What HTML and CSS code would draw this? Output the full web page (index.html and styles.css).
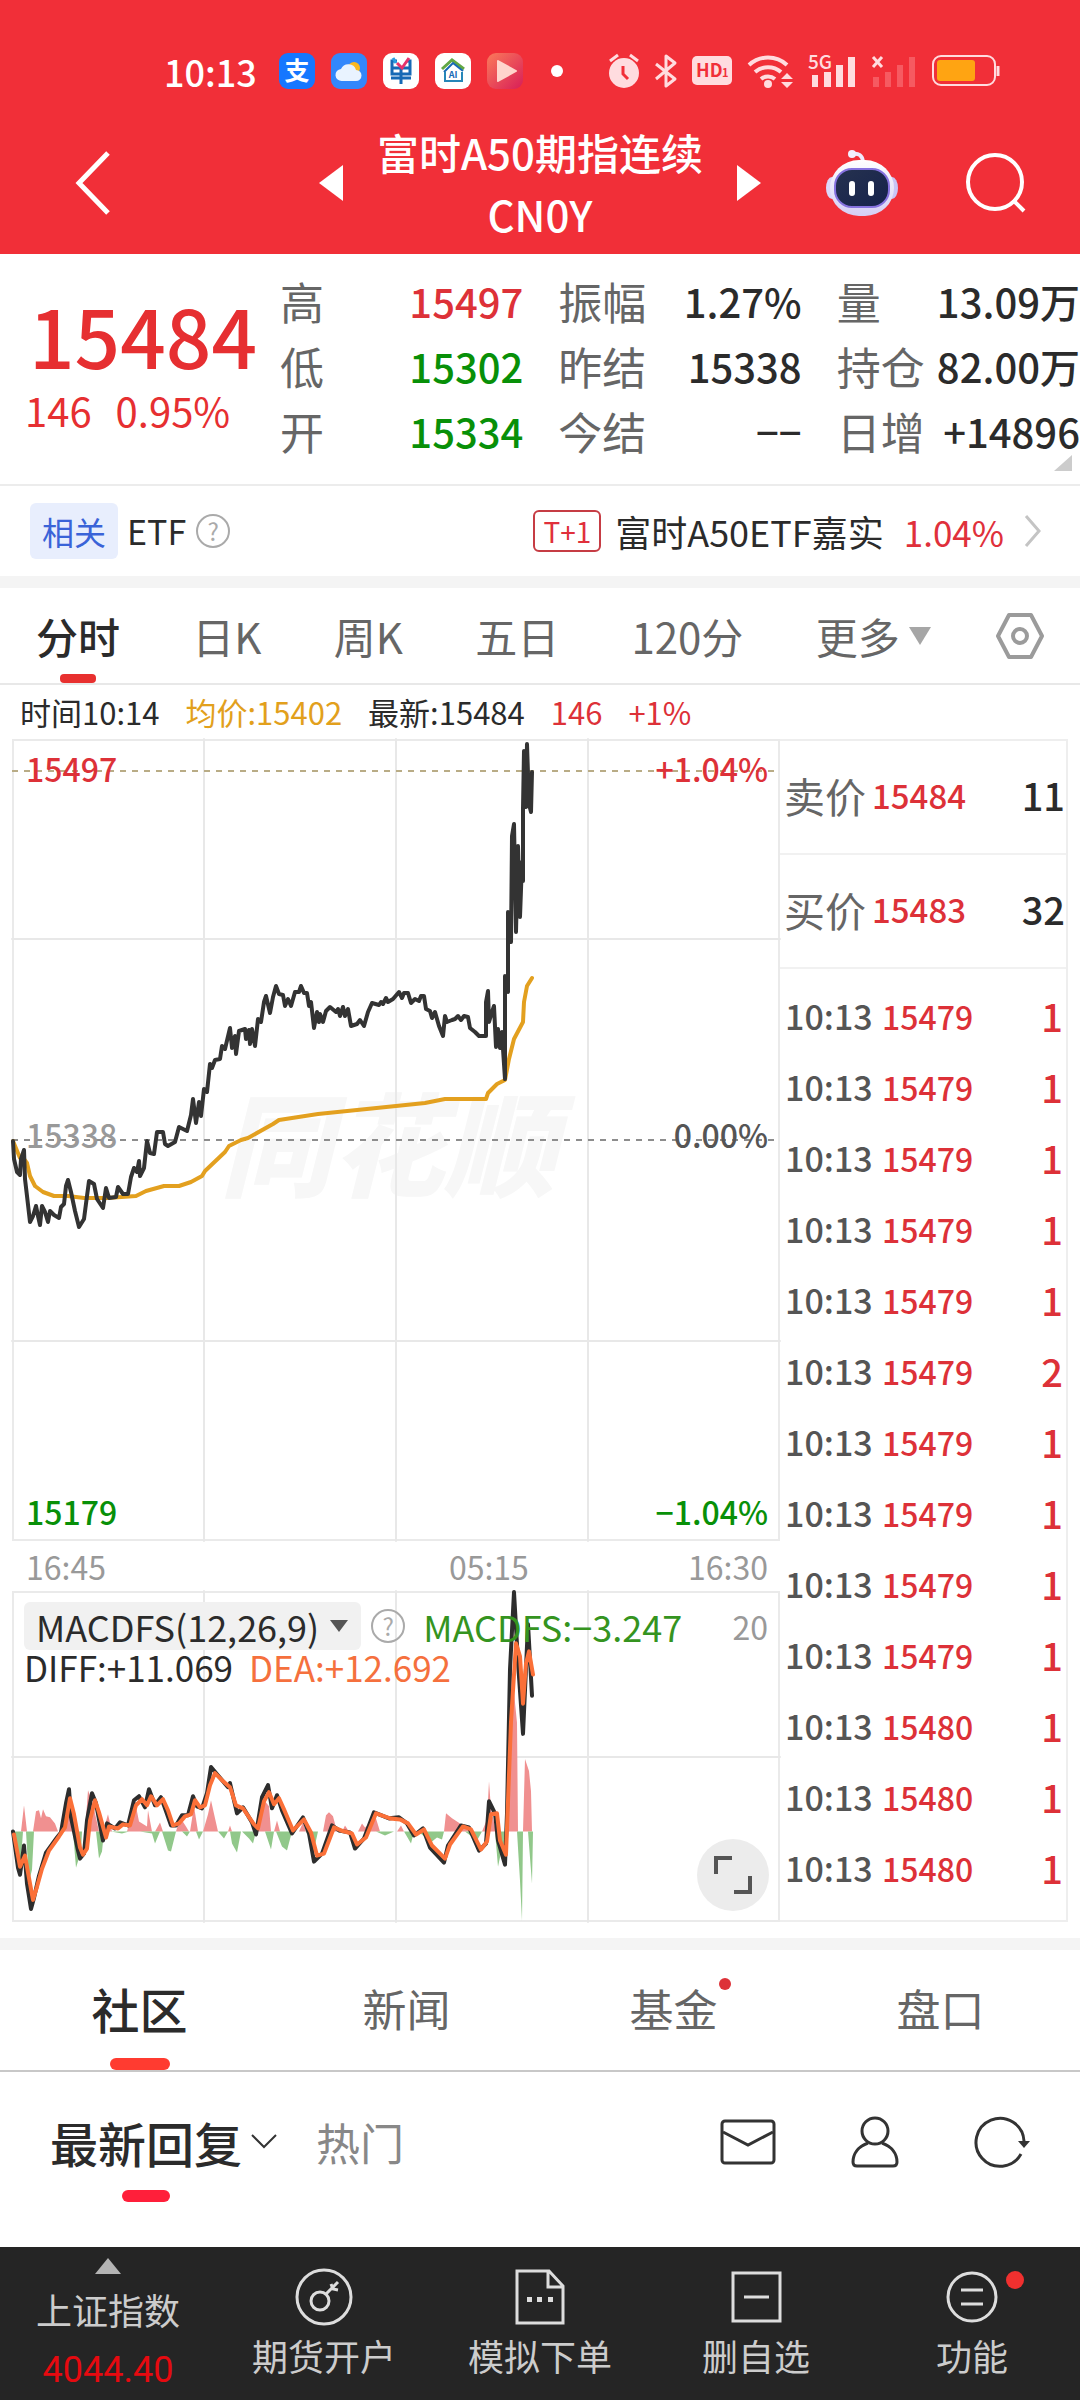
FILE: index.html
```html
<!DOCTYPE html>
<html lang="zh-CN">
<head>
    <meta charset="UTF-8">
    <meta name="viewport" content="width=device-width, initial-scale=1.0">
    <title>富时A50期指连续 CN0Y</title>
    <link rel="stylesheet" href="styles.css">
</head>
<body>
    <header class="header">
        <div class="status-bar">
            <span class="clock">10:13</span>
            <div class="status-apps">
                <svg width="36" height="36" viewBox="0 0 36 36"><rect width="36" height="36" rx="9" fill="#1677ff"/><text x="18" y="27" text-anchor="middle" font-size="25" font-weight="700" fill="#fff">支</text></svg>
                <svg width="36" height="36" viewBox="0 0 36 36"><rect width="36" height="36" rx="9" fill="#3387fb"/><circle cx="23" cy="15" r="6" fill="#fdb81e"/><path d="M11 28a6 6 0 0 1-1-12 8 8 0 0 1 15 1 5.500 5.500 0 0 1 0 11z" fill="#e9f3ff"/></svg>
                <svg width="36" height="36" viewBox="0 0 36 36"><rect width="36" height="36" rx="9" fill="#fff"/><path d="M14 8H9v13h18V8h-3M9 15h18M18 15v16M8 25h20" fill="none" stroke="#1769b5" stroke-width="3"/><path d="M10 5l3 5" stroke="#2b9de0" stroke-width="3"/><path d="M14 10l5 5 7-10" fill="none" stroke="#e7336c" stroke-width="3"/></svg>
                <svg width="36" height="36" viewBox="0 0 36 36"><rect width="36" height="36" rx="9" fill="#fff"/><path d="M7 16l10-9 12 9" fill="none" stroke="#62a744" stroke-width="3"/><path d="M9 19l9-9 10 8" fill="none" stroke="#1769b5" stroke-width="2"/><path d="M10 19v9h17v-9" fill="none" stroke="#2686b8" stroke-width="2"/><text x="18" y="25" text-anchor="middle" font-size="9" font-weight="700" fill="#1769b5">AI</text></svg>
                <svg width="36" height="36" viewBox="0 0 36 36"><defs><linearGradient id="play" x1="0" y1="0" x2="1" y2="1"><stop offset="0" stop-color="#fb7a5a"/><stop offset="1" stop-color="#d81e58"/></linearGradient></defs><rect width="36" height="36" rx="9" fill="url(#play)"/><path d="M11 8l18 10-18 10z" fill="#ffd5cc" stroke="#ffd5cc" stroke-width="2" stroke-linejoin="round"/></svg>
            </div>
            <span class="status-dot"></span>
            <div class="status-icons">
                <svg width="32" height="36" viewBox="0 0 32 36"><circle cx="16" cy="20" r="15" fill="#ffdcdf"/><path d="M2 8l8-6M30 8l-8-6" stroke="#ffdcdf" stroke-width="3"/><path d="M15 13v8l5 5" fill="none" stroke="#f12f38" stroke-width="3"/></svg>
                <svg width="22" height="36" viewBox="0 0 22 36"><path d="M1 11l19 15-9 7V3l9 7L1 26" fill="none" stroke="#ffdcdf" stroke-width="3" stroke-linejoin="round"/></svg>
                <svg width="40" height="30" viewBox="0 0 40 30"><rect width="40" height="29" rx="5" fill="#ffdcdf"/><text x="4" y="21" font-size="18" font-weight="700" fill="#f12f38">HD</text><text x="30" y="21" font-size="11" font-weight="700" fill="#f12f38">1</text></svg>
                <svg width="46" height="36" viewBox="0 0 46 36"><g fill="none" stroke="#ffdcdf" stroke-width="4"><path d="M2 12a28 28 0 0 1 38 0"/><path d="M8 19a20 20 0 0 1 26 0"/><path d="M14 26a11 11 0 0 1 14 0"/></g><circle cx="21" cy="31" r="4" fill="#ffdcdf"/><path d="M34 26l6-6 6 6zM34 29l6 6 6-6z" fill="#ffdcdf"/></svg>
                <svg width="48" height="36" viewBox="0 0 48 36"><text x="0" y="16" font-size="19" font-weight="500" fill="#ffdcdf">5G</text><path d="M4 22h6v12H4zM16 19h7v15h-7zM28 12h7v22h-7zM40 4h7v30h-7z" fill="#ffdcdf"/></svg>
                <svg width="46" height="36" viewBox="0 0 46 36"><path d="M2 4l9 10M11 4L2 14" stroke="#ffdcdf" stroke-width="3"/><path d="M2 24h6v10H2zM14 19h6v15h-6zM26 12h6v22h-6zM38 4h6v30h-6z" fill="#f65a61"/></svg>
                <svg width="68" height="32" viewBox="0 0 68 32"><rect x="1" y="1" width="62" height="29" rx="8" fill="none" stroke="#ffdcdf" stroke-width="2"/><rect x="5" y="5" width="38" height="21" rx="3" fill="#ffa412"/><path d="M66 11v10" stroke="#ffdcdf" stroke-width="3"/></svg>
            </div>
        </div>
        <div class="title-bar">
            <button class="icon-btn back" aria-label="返回">
                <svg width="34" height="64" viewBox="0 0 34 64"><path d="M32 2L3 32l29 30" fill="none" stroke="#fff" stroke-width="5"/></svg>
            </button>
            <div class="title-nav">
                <button class="icon-btn" aria-label="上一个"><svg width="24" height="36" viewBox="0 0 24 36"><path d="M24 0v36L0 18z" fill="#fff"/></svg></button>
                <h1 class="title">富时A50期指连续<br>CN0Y</h1>
                <button class="icon-btn" aria-label="下一个"><svg width="24" height="36" viewBox="0 0 24 36"><path d="M0 0v36l24-18z" fill="#fff"/></svg></button>
            </div>
            <div class="title-tools">
                <button class="icon-btn" aria-label="智能助手">
                    <svg width="72" height="66" viewBox="0 0 72 66">
                        <defs>
                            <linearGradient id="shell" x1="0" y1="0" x2="0" y2="1"><stop offset="0" stop-color="#fff"/><stop offset="1" stop-color="#d5cef5"/></linearGradient>
                            <linearGradient id="visor" x1="0" y1="0" x2="1" y2="1"><stop offset="0" stop-color="#26324f"/><stop offset="1" stop-color="#16224c"/></linearGradient>
                        </defs>
                        <path d="M26 4q10-2 11 8" fill="none" stroke="#efeafd" stroke-width="4"/><circle cx="26" cy="4" r="4" fill="#f3f0ff"/>
                        <ellipse cx="6" cy="38" rx="6" ry="11" fill="#dcd8fa"/><ellipse cx="66" cy="38" rx="6" ry="11" fill="#c9c4f6"/>
                        <rect x="4" y="10" width="64" height="56" rx="29" fill="url(#shell)"/>
                        <rect x="9" y="19" width="54" height="38" rx="17" fill="url(#visor)" stroke="#8672df" stroke-width="2"/>
                        <path d="M26 34v9M45 34v9" stroke="#fff" stroke-width="6" stroke-linecap="round"/>
                    </svg>
                </button>
                <button class="icon-btn" aria-label="搜索">
                    <svg width="60" height="60" viewBox="0 0 60 60"><circle cx="29" cy="29" r="27" fill="none" stroke="#fff" stroke-width="4"/><path d="M47 47l11 11" stroke="#fff" stroke-width="4"/></svg>
                </button>
            </div>
        </div>
    </header>

    <main>
        <section class="quote">
            <div class="price">
                <div class="price-now">15484</div>
                <div class="price-change"><span>146</span><span>0.95%</span></div>
            </div>
            <dl class="stats">
                <div class="stat"><dt>高</dt><dd class="up">15497</dd></div>
                <div class="stat"><dt>振幅</dt><dd>1.27%</dd></div>
                <div class="stat"><dt>量</dt><dd>13.09万</dd></div>
                <div class="stat"><dt>低</dt><dd class="down">15302</dd></div>
                <div class="stat"><dt>昨结</dt><dd>15338</dd></div>
                <div class="stat"><dt>持仓</dt><dd>82.00万</dd></div>
                <div class="stat"><dt>开</dt><dd class="down">15334</dd></div>
                <div class="stat"><dt>今结</dt><dd>−−</dd></div>
                <div class="stat"><dt>日增</dt><dd>+14896</dd></div>
            </dl>
            <span class="corner"></span>
        </section>

        <section class="related">
            <span class="related-tag">相关</span>
            <span class="related-type">ETF</span>
            <span class="help">?</span>
            <a href="#" class="related-link">
                <span class="t1">T+1</span>
                <span class="fund">富时A50ETF嘉实</span>
                <span class="fund-change">1.04%</span>
                <svg width="18" height="32" viewBox="0 0 18 32"><path d="M2 1l13 15L2 31" fill="none" stroke="#c4c4c4" stroke-width="3"/></svg>
            </a>
        </section>

        <nav class="periods">
            <a href="#" class="period active">分时</a>
            <a href="#" class="period">日K</a>
            <a href="#" class="period">周K</a>
            <a href="#" class="period">五日</a>
            <a href="#" class="period">120分</a>
            <a href="#" class="period more">更多<svg width="24" height="20" viewBox="0 0 24 20"><path d="M1 1h22L12 19z" fill="#a6a6a6"/></svg></a>
            <button class="icon-btn" aria-label="设置">
                <svg width="48" height="48" viewBox="0 0 48 48"><path d="M13 3h22l11 21-11 21H13L2 24z" fill="none" stroke="#9b9b9b" stroke-width="4" stroke-linejoin="round"/><circle cx="24" cy="24" r="7" fill="none" stroke="#9b9b9b" stroke-width="4"/></svg>
            </button>
        </nav>

        <div class="info">
            <span>时间10:14</span>
            <span class="avg">均价:15402</span>
            <span>最新:15484</span>
            <span class="up">146</span>
            <span class="up">+1%</span>
        </div>

        <section class="market">
            <div class="charts">
                <div class="chart price-chart">
                    <div class="watermark">同花顺</div>
                    <svg class="plot" viewBox="0 0 768 802" preserveAspectRatio="none">
                        <path class="grid" d="M192 0v802M384 0v802M576 0v802M0 200h768M0 602h768"/>
                        <path class="limit" d="M0 32h768"/>
                        <path class="base" d="M0 401h768"/>
                        <polyline class="avg-line" points="1,402 8,419 12,420 15,424 18,437 23,447 31,453 42,457 56,457 72,459 95,459 124,457 134,452 152,447 167,447 179,443 190,437 193,432 213,413 217,407 229,401 236,399 261,385 267,381 306,375 345,371 384,367 413,364 433,360 474,360 476,354 485,345 493,341 497,320 502,300 511,283 512,263 515,247 520,239"/>
                        <polyline class="price-line" points="1,402 2,420 5,433 8,436 9,420 12,411 13,440 15,457 18,483 21,477 24,467 26,477 28,486 30,467 33,473 36,483 38,472 42,476 47,479 49,468 52,465 54,447 56,441 59,453 63,472 67,488 72,480 75,457 77,442 82,445 85,460 91,469 94,449 97,459 104,458 106,448 111,455 116,455 119,438 122,429 125,433 127,422 128,437 132,429 135,402 138,414 142,415 145,393 151,393 153,405 156,407 163,403 167,388 175,392 179,376 181,360 184,384 187,363 189,377 192,350 195,353 198,325 200,329 203,321 208,320 210,307 213,310 218,289 220,309 223,297 224,315 227,292 233,290 234,300 237,291 238,305 240,290 243,307 246,280 249,283 252,263 254,257 258,274 261,258 264,247 267,255 271,256 273,267 276,260 279,267 283,253 287,253 289,247 292,254 295,254 297,267 299,263 302,289 305,273 307,283 308,275 311,283 314,272 318,268 324,273 326,270 328,277 331,268 333,277 336,270 339,287 345,285 348,281 352,287 356,273 360,264 367,266 369,263 371,265 374,259 376,263 381,260 387,253 390,259 392,254 396,254 399,264 403,260 407,262 409,257 412,257 414,270 418,272 420,279 423,273 427,287 431,297 433,277 435,283 440,281 443,280 446,277 449,281 452,277 456,278 458,289 463,293 467,297 474,297 474,263 476,252 477,283 480,273 482,267 484,308 486,290 488,309 490,293 491,310 493,340 493,237 496,253 496,173 499,203 500,97 502,85 504,193 506,107 508,178 510,123 511,142 511,70 512,12 514,68 515,5 517,65 519,73 520,33"/>
                    </svg>
                    <span class="axis top-left up">15497</span>
                    <span class="axis top-right up">+1.04%</span>
                    <span class="axis mid-left">15338</span>
                    <span class="axis mid-right">0.00%</span>
                    <span class="axis bottom-left down">15179</span>
                    <span class="axis bottom-right down">−1.04%</span>
                </div>
                <div class="times">
                    <span>16:45</span>
                    <span>05:15</span>
                    <span>16:30</span>
                </div>
                <div class="chart macd-chart">
                    <svg class="plot" viewBox="0 0 768 329" preserveAspectRatio="none">
                        <path class="grid" d="M192 0v329M384 0v329M576 0v329M0 165h768"/>
                        <path class="hist-up" d="M9 239l3-26 3 26zM21 239l3-20 3-1 2 8 2-9 3 7 4 1 5 6 3 8zM50 239l6-38 4 38zM73 239l3-41 5 14 6 27zM91 239l5-17 4 17zM115 239l8-30 4 20 8 5 1-16 4 21zM143 239l5-9 3 9zM164 239l4-14 6 9 3 5zM178 239l4-25 4 25zM191 239l5-17 3-14 4 18 3 13zM216 239l2-6 2 6zM243 239l5-14 5-16 4 5 2 25zM262 239l3-11 3 11zM287 239l4-9 3 9zM311 239l3-16 3-3 4 4 4 15zM330 239l3-6 4 6zM346 239l4-8 3 4 5-4 5-8 5 16zM385 239l4-6 3 6zM432 239l2-18 6 5 8 5 12 8zM470 239l5-12 2-38 2 28 5 22zM494 239l2-98 5-50 4 40 1 108zM511 239l2-72 4 12 2 20 1 40z"/>
                        <path class="hist-down" d="M1 239h10l-2 28-3 3zM14 239h8l-2 38-3 12zM61 239h9l-1 20-5 16zM84 239h8l-2 20-3 7zM99 239h18l-7 2zM128 239h20l-5 12-3-10zM150 239h14l-5 20-3-1zM170 239h8l-3 5zM184 239h7l-4 8zM206 239h10l-4 7zM218 239h11l-4 21-5-9zM230 239h14l-3 12-4-5zM253 239h9l-3 18zM264 239h16l-5 19-5-4zM294 239h12l-4 18-5-12zM364 239h18l-9 4zM392 239h10l-3 12zM406 239h26l-2 8-5-2-5 4-5-3zM453 239h17l-5 9zM483 239h10l-1 27-3-6-3 14zM505 239h6l-1 89-2-40zM516 239h5l-1 52z"/>
                        <polyline class="diff-line" points="1,239 6,275 8,282 12,253 15,291 19,316 22,305 27,283 34,260 45,245 49,240 54,211 57,197 59,225 66,258 68,266 72,261 75,228 80,201 84,211 91,248 95,231 103,236 108,230 116,233 122,208 127,204 133,215 137,197 143,213 149,205 153,216 159,233 164,233 170,223 176,223 181,204 185,214 190,216 195,201 199,175 204,181 216,195 218,191 225,221 231,215 240,230 244,242 250,205 256,193 260,216 265,203 270,218 280,241 291,225 297,241 302,269 310,261 320,233 327,238 338,240 343,256 352,246 362,220 377,226 387,225 395,231 402,243 411,236 418,255 432,270 436,253 449,233 457,235 467,258 474,251 477,209 483,221 486,248 493,272 495,221 498,78 502,1 506,71 511,142 516,33 520,104"/>
                        <polyline class="dea-line" points="2,242 8,274 13,263 16,280 21,307 25,294 30,276 37,258 47,244 53,235 58,206 62,222 68,255 71,262 75,256 78,228 83,208 87,220 94,245 97,234 106,236 111,232 118,233 124,213 130,207 135,213 139,204 145,213 151,207 156,218 161,233 167,231 173,224 179,222 183,208 188,215 193,213 198,193 203,181 210,188 218,195 224,213 231,216 242,232 246,236 252,209 257,200 262,212 267,206 272,217 281,238 292,227 299,240 305,263 312,261 322,235 329,238 340,241 345,252 354,245 364,221 378,226 388,227 396,231 404,242 412,237 420,253 433,266 438,252 451,234 459,237 469,257 475,249 479,222 485,221 488,248 494,262 499,130 504,52 508,65 511,112 514,72 517,60 521,83"/>
                    </svg>
                    <div class="legend">
                        <button class="indicator">MACDFS(12,26,9)<svg width="20" height="14" viewBox="0 0 20 14"><path d="M1 1h18l-9 12z" fill="#555"/></svg></button>
                        <span class="help">?</span>
                        <span class="macd">MACDFS:−3.247</span>
                        <span class="scale">20</span>
                    </div>
                    <div class="legend-values">
                        <span>DIFF:+11.069</span>
                        <span class="dea">DEA:+12.692</span>
                    </div>
                    <button class="expand" aria-label="全屏">
                        <svg width="38" height="38" viewBox="0 0 38 38"><path d="M2 18V2h16M36 20v16H20" fill="none" stroke="#555" stroke-width="4"/></svg>
                    </button>
                </div>
            </div>

            <div class="ticks">
                <div class="ask"><span class="side">卖价</span><span class="side-price">15484</span><span class="qty">11</span></div>
                <div class="ask"><span class="side">买价</span><span class="side-price">15483</span><span class="qty">32</span></div>
                <table class="trades">
                    <tr><td>10:13</td><td>15479</td><td>1</td></tr>
                    <tr><td>10:13</td><td>15479</td><td>1</td></tr>
                    <tr><td>10:13</td><td>15479</td><td>1</td></tr>
                    <tr><td>10:13</td><td>15479</td><td>1</td></tr>
                    <tr><td>10:13</td><td>15479</td><td>1</td></tr>
                    <tr><td>10:13</td><td>15479</td><td>2</td></tr>
                    <tr><td>10:13</td><td>15479</td><td>1</td></tr>
                    <tr><td>10:13</td><td>15479</td><td>1</td></tr>
                    <tr><td>10:13</td><td>15479</td><td>1</td></tr>
                    <tr><td>10:13</td><td>15479</td><td>1</td></tr>
                    <tr><td>10:13</td><td>15480</td><td>1</td></tr>
                    <tr><td>10:13</td><td>15480</td><td>1</td></tr>
                    <tr><td>10:13</td><td>15480</td><td>1</td></tr>
                </table>
            </div>
        </section>

        <nav class="sections">
            <a href="#" class="active">社区</a>
            <a href="#">新闻</a>
            <a href="#"><span class="has-dot">基金</span></a>
            <a href="#">盘口</a>
        </nav>

        <section class="community">
            <button class="sort active">最新回复<svg width="28" height="20" viewBox="0 0 28 20"><path d="M2 3l12 12L26 3" fill="none" stroke="#333" stroke-width="2"/></svg></button>
            <button class="sort hot">热门</button>
            <div class="community-tools">
                <button class="icon-btn" aria-label="消息"><svg width="56" height="52" viewBox="0 0 56 52"><rect x="2" y="5" width="52" height="42" rx="3" fill="none" stroke="#333" stroke-width="3"/><path d="M3 16l25 13 25-13" fill="none" stroke="#333" stroke-width="3"/></svg></button>
                <button class="icon-btn" aria-label="我的"><svg width="48" height="52" viewBox="0 0 48 52"><circle cx="24" cy="15" r="13" fill="none" stroke="#333" stroke-width="3"/><path d="M17 27C6 31 2 39 2 46q0 4 4 4h36q4 0 4-4c0-7-4-15-15-19" fill="none" stroke="#333" stroke-width="3"/></svg></button>
                <button class="icon-btn" aria-label="刷新"><svg width="56" height="52" viewBox="0 0 56 52"><path d="M47 38A24 24 0 1 1 50 25" fill="none" stroke="#333" stroke-width="3"/><path d="M44 25h12l-6 7z" fill="#333"/></svg></button>
            </div>
        </section>
    </main>

    <footer class="footer">
        <a href="#" class="index">
            <svg width="26" height="16" viewBox="0 0 26 16"><path d="M13 0l13 16H0z" fill="#b4b4b4"/></svg>
            <span>上证指数</span>
            <span class="index-value">4044.40</span>
        </a>
        <a href="#">
            <svg width="58" height="58" viewBox="0 0 58 58"><g fill="none" stroke="#ddd" stroke-width="3"><circle cx="29" cy="29" r="27"/><circle cx="25" cy="33" r="9"/><path d="M31 26l12-12M36 16l2 5 5 1"/></g></svg>
            <span>期货开户</span>
        </a>
        <a href="#">
            <svg width="58" height="58" viewBox="0 0 58 58"><path d="M6 3h32l14 15v37H6zM37 3v16h15" fill="none" stroke="#ddd" stroke-width="3"/><path d="M16 29h5v5h-5zM26 29h5v5h-5zM37 29h5v5h-5z" fill="#ddd"/></svg>
            <span>模拟下单</span>
        </a>
        <a href="#">
            <svg width="58" height="58" viewBox="0 0 58 58"><path d="M6 5h47v48H6zM17 29h25" fill="none" stroke="#ddd" stroke-width="3"/></svg>
            <span>删自选</span>
        </a>
        <a href="#" class="func">
            <svg width="58" height="58" viewBox="0 0 58 58"><circle cx="29" cy="29" r="24" fill="none" stroke="#ddd" stroke-width="3"/><path d="M18 22h22M18 36h22" stroke="#ddd" stroke-width="3"/></svg>
            <span>功能</span>
        </a>
    </footer>
</body>
</html>
```
FILE: styles.css
```css
* {
    box-sizing: border-box;
}
body {
    margin: 0;
    min-height: 100vh;
    display: flex;
    flex-direction: column;
    background-color: #fff;
    color: #2b2b2b;
    font-family: "Noto Sans CJK SC", sans-serif;
    font-size: 32px;
    line-height: 1;
}
a {
    color: inherit;
    text-decoration: none;
}
button {
    font-family: inherit;
    border: 0;
    padding: 0;
    background: none;
    color: inherit;
    cursor: pointer;
}
svg {
    display: block;
    flex-shrink: 0;
    overflow: visible;
}
.icon-btn {
    display: block;
}
.up {
    color: #dd3138;
}
.down {
    color: #089008;
}

/* header */
.header {
    background-color: #f12f38;
    color: #fff;
}
.status-bar {
    display: flex;
    align-items: center;
    height: 100px;
    padding: 42px 80px 0 164px;
}
.clock {
    font-size: 36px;
    font-weight: 500;
}
.status-apps {
    display: flex;
    gap: 16px;
    margin-left: 22px;
}
.status-dot {
    width: 12px;
    height: 12px;
    margin-left: 28px;
    border-radius: 50%;
    background-color: #fff;
}
.status-icons {
    display: flex;
    align-items: center;
    gap: 15px;
    margin-left: auto;
}
.title-bar {
    display: grid;
    grid-template-columns: 1fr auto 1fr;
    align-items: center;
    height: 154px;
    padding: 12px 54px 0;
}
.back {
    margin-left: 22px;
    justify-self: start;
}
.title-nav {
    display: flex;
    align-items: center;
    gap: 34px;
}
.title {
    margin: 0;
    font-size: 42px;
    font-weight: 500;
    line-height: 62px;
    text-align: center;
}
.title-tools {
    display: flex;
    align-items: center;
    justify-content: flex-end;
    gap: 68px;
}

/* quote */
.quote {
    position: relative;
    display: flex;
    height: 232px;
    padding-top: 14px;
    border-bottom: 2px solid #ececec;
}
.price {
    width: 280px;
    padding: 26px 0 0 29px;
    color: #e62f31;
}
.price-now {
    font-size: 80px;
    font-weight: 500;
    line-height: 80px;
}
.price-change {
    display: flex;
    gap: 24px;
    margin-left: -4px;
    font-size: 40px;
    line-height: 72px;
}
.stats {
    flex: 1;
    display: grid;
    grid-template-columns: repeat(3, 1fr);
    grid-auto-rows: 65px;
    column-gap: 35px;
    margin: 0;
}
.stat {
    display: flex;
    align-items: center;
    justify-content: space-between;
    white-space: nowrap;
}
.stat dt {
    color: #666;
    font-size: 44px;
}
.stat dd {
    margin: 0;
    font-size: 40px;
    font-weight: 500;
}
.corner {
    position: absolute;
    right: 8px;
    bottom: 13px;
    border-left: 18px solid transparent;
    border-bottom: 16px solid #ccc;
}

/* related fund */
.related {
    display: flex;
    align-items: center;
    height: 90px;
    padding: 0 38px 0 30px;
}
.related-tag {
    padding: 0 12px;
    border-radius: 6px;
    background-color: #e8eefd;
    color: #3a63d8;
    font-size: 32px;
    line-height: 56px;
}
.related-type {
    margin: 0 10px 0 9px;
    font-size: 34px;
}
.help {
    width: 34px;
    height: 34px;
    border: 2px solid #aaa;
    border-radius: 50%;
    color: #aaa;
    font-size: 24px;
    line-height: 29px;
    text-align: center;
}
.related-link {
    display: flex;
    align-items: center;
    margin-left: auto;
}
.t1 {
    padding: 0 8px;
    border: 2px solid #c63c44;
    border-radius: 6px;
    color: #e0303b;
    font-size: 28px;
    line-height: 38px;
}
.fund {
    margin: 0 20px 0 14px;
    font-size: 36px;
}
.fund-change {
    margin-right: 20px;
    color: #e0303b;
    font-size: 35px;
}

/* chart tabs */
.periods {
    display: flex;
    align-items: center;
    justify-content: space-between;
    height: 109px;
    padding: 0 36px;
    border-top: 12px solid #f4f4f4;
    border-bottom: 2px solid #e8e8e8;
}
.period {
    position: relative;
    color: #666;
    font-size: 42px;
    line-height: 95px;
}
.period.active {
    color: #2b2b2b;
    font-weight: 500;
}
.period.active::after {
    content: "";
    position: absolute;
    left: 50%;
    bottom: 0;
    width: 36px;
    height: 9px;
    margin-left: -18px;
    border-radius: 4px;
    background-color: #e8302f;
}
.more {
    display: flex;
    align-items: center;
    gap: 8px;
    margin-right: -8px;
}
.info {
    display: flex;
    gap: 26px;
    padding-left: 20px;
    font-size: 31px;
    line-height: 54px;
}
.avg {
    color: #e2a01c;
}

/* charts and trade list */
.market {
    display: grid;
    grid-template-columns: 8fr 3fr;
    padding: 0 12px 16px;
}
.chart {
    position: relative;
    border: 2px solid #eaeaea;
}
.price-chart {
    height: 802px;
}
.macd-chart {
    height: 331px;
}
.plot {
    position: absolute;
    top: -2px;
    left: -2px;
    width: calc(100% + 4px);
    height: calc(100% + 4px);
}
.plot path, .plot polyline {
    fill: none;
    stroke-linejoin: round;
    stroke-linecap: round;
}
.plot .grid {
    stroke: #e8e8e8;
    stroke-width: 2;
}
.plot .limit {
    stroke: #b9ac86;
    stroke-width: 2;
    stroke-linecap: butt;
    stroke-dasharray: 6 6;
}
.plot .base {
    stroke: #8d8d8d;
    stroke-width: 2;
    stroke-linecap: butt;
    stroke-dasharray: 6 6;
}
.plot .avg-line {
    stroke: #e3a01f;
    stroke-width: 4;
}
.plot .price-line {
    stroke: #333;
    stroke-width: 4;
}
.plot .hist-up {
    fill: #f09090;
}
.plot .hist-down {
    fill: #91c88a;
}
.plot .diff-line {
    stroke: #2d2d2d;
    stroke-width: 4;
}
.plot .dea-line {
    stroke: #fb7038;
    stroke-width: 4;
}
.watermark {
    position: absolute;
    top: 342px;
    left: 206px;
    color: #f7f7f7;
    font-size: 112px;
    font-style: italic;
    font-weight: 900;
}
.axis {
    position: absolute;
    font-weight: 500;
}
.top-left, .mid-left, .bottom-left {
    left: 12px;
}
.top-right, .mid-right, .bottom-right {
    right: 10px;
}
.top-left, .top-right {
    top: 11px;
}
.mid-left, .mid-right {
    top: 377px;
    color: #555;
}
.mid-left {
    color: #999;
}
.bottom-left, .bottom-right {
    bottom: 12px;
}
.times {
    display: grid;
    grid-template-columns: 57% 1fr auto;
    padding: 0 12px 0 14px;
    color: #999;
    line-height: 50px;
}
.legend {
    position: absolute;
    top: 9px;
    left: 10px;
    right: 10px;
    display: flex;
    align-items: center;
    font-size: 36px;
}
.indicator {
    display: flex;
    align-items: center;
    gap: 10px;
    padding: 0 12px;
    border-radius: 6px;
    background-color: #f1f1f1;
    font-size: 36px;
    line-height: 48px;
}
.legend .help {
    margin: 0 18px 0 10px;
}
.macd {
    color: #35941f;
}
.scale {
    margin-left: auto;
    color: #999;
    font-size: 32px;
}
.legend-values {
    position: absolute;
    top: 56px;
    left: 10px;
    display: flex;
    gap: 16px;
    font-size: 35px;
}
.dea {
    color: #f5703d;
}
.expand {
    position: absolute;
    right: 9px;
    bottom: 9px;
    display: flex;
    align-items: center;
    justify-content: center;
    width: 72px;
    height: 72px;
    border-radius: 50%;
    background-color: #ececec;
}
.ticks {
    border: 2px solid #eee;
    border-left: 0;
    font-weight: 500;
}
.ask {
    display: flex;
    align-items: center;
    height: 114px;
    padding: 0 1px 4px 4px;
    border-bottom: 2px solid #f1f1f1;
}
.side {
    margin-right: 6px;
    color: #666;
    font-size: 41px;
    font-weight: 400;
}
.side-price {
    color: #dd3138;
    font-size: 33px;
}
.qty {
    margin-left: auto;
    font-size: 38px;
}
.trades {
    width: 100%;
    margin-top: 11px;
    border-collapse: collapse;
}
.trades td {
    height: 71px;
    padding: 0;
    color: #dd3138;
    font-size: 32px;
}
.trades td:first-child {
    width: 102px;
    padding-left: 5px;
    color: #555;
    font-size: 34px;
}
.trades td:last-child {
    padding-right: 3px;
    font-size: 38px;
    text-align: right;
}

/* community */
.sections {
    display: grid;
    grid-template-columns: repeat(4, 1fr);
    height: 134px;
    padding: 0 6px;
    border-top: 12px solid #f4f4f4;
    border-bottom: 2px solid #c8c8c8;
    color: #666;
    font-size: 44px;
    line-height: 117px;
    text-align: center;
}
.sections a {
    position: relative;
}
.sections .active {
    color: #2b2b2b;
    font-size: 48px;
    font-weight: 500;
}
.sections .active::after, .sort.active::after {
    content: "";
    position: absolute;
    left: 50%;
    bottom: 0;
    width: 60px;
    height: 12px;
    margin-left: -30px;
    border-radius: 6px;
    background-color: #ff3b30;
}
.has-dot {
    position: relative;
}
.has-dot::after {
    content: "";
    position: absolute;
    top: 2px;
    right: -13px;
    width: 12px;
    height: 12px;
    border-radius: 50%;
    background-color: #dd3138;
}
.community {
    display: flex;
    align-items: center;
    height: 144px;
    padding: 0 50px 4px;
}
.sort {
    position: relative;
    display: flex;
    align-items: center;
    gap: 8px;
    font-size: 48px;
    font-weight: 500;
    line-height: 112px;
}
.sort.active::after {
    bottom: -4px;
    left: 96px;
    width: 48px;
    margin-left: -24px;
    background-color: #ff1f3a;
}
.hot {
    margin-left: 38px;
    color: #888;
    font-size: 44px;
    font-weight: 400;
}
.community-tools {
    display: flex;
    gap: 75px;
    margin-left: auto;
}

/* bottom bar */
.footer {
    display: grid;
    grid-template-columns: repeat(5, 1fr);
    height: 153px;
    margin-top: auto;
    background-color: #252525;
    color: #ccc;
    font-size: 36px;
}
.footer a {
    position: relative;
    display: flex;
    flex-direction: column;
    align-items: center;
    gap: 11px;
    padding-top: 21px;
}
.footer .index {
    gap: 17px;
    padding-top: 11px;
}
.index-value {
    padding-top: 8px;
    color: #e60a10;
    font-family: Roboto, sans-serif;
}
.func::after {
    content: "";
    position: absolute;
    top: 24px;
    left: 50%;
    width: 18px;
    height: 18px;
    margin-left: 34px;
    border-radius: 50%;
    background-color: #f0302f;
}
```
